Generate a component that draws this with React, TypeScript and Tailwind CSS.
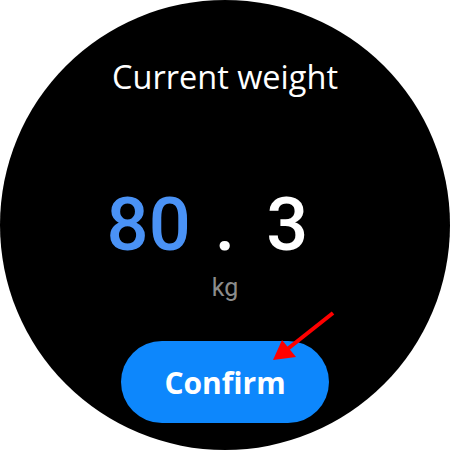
const App = () => {
  return (
    <div className="relative flex h-[450px] w-[450px] items-center justify-center bg-white">
      <div className="flex h-[450px] w-[450px] flex-col items-center rounded-full bg-black font-['Open_Sans',sans-serif]">
        <p className="mt-[57px] text-[32.5px] leading-[40px] text-white">Current weight</p>
        <div className="mt-[95px] grid h-[66px] w-full grid-cols-[1fr_auto_1fr] font-['Roboto',sans-serif] text-[74px] font-medium leading-[66px]">
          <span className="pr-[24px] text-right text-[#4a92f5]">80</span>
          <span className="text-white">.</span>
          <span className="pl-[31px] text-white">3</span>
        </div>
        <p className="mt-[15px] font-['Roboto',sans-serif] text-[25px] leading-[30px] text-[#8c8c8c]">kg</p>
        <button className="mt-[38px] flex h-[82px] w-[208px] items-center justify-center rounded-full bg-[#0d87fc] text-[30px] font-bold text-white">
          Confirm
        </button>
      </div>
      <svg className="absolute left-0 top-0" width="450" height="450" viewBox="0 0 450 450">
        <line x1="333" y1="313" x2="285" y2="351" stroke="#ff0000" strokeWidth="4" />
        <polygon points="273,360 282,340 296,357" fill="#ff0000" />
      </svg>
    </div>
  );
};

export default App;
